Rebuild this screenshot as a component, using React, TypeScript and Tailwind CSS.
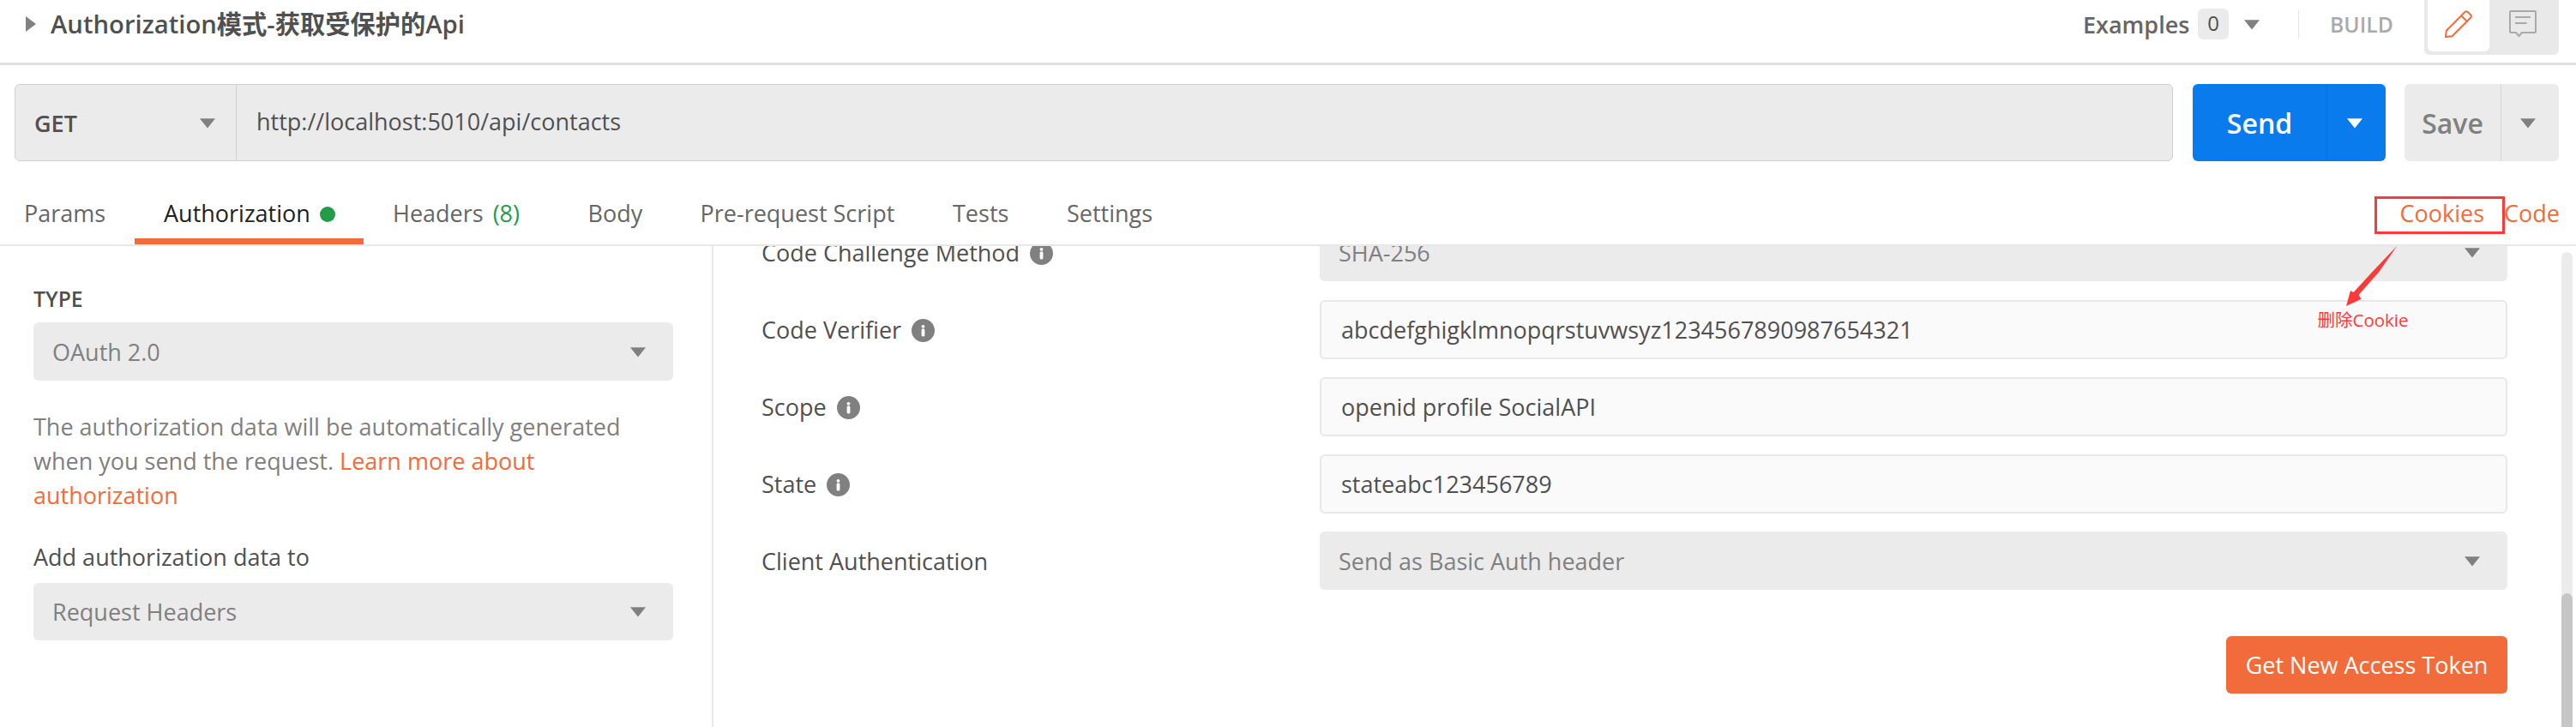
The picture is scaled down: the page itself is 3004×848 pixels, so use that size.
import React from "react";

function Caret({ className = "" }: { className?: string }) {
  return (
    <svg className={`h-[12px] w-[18px] shrink-0 ${className}`} viewBox="0 0 18 12" fill="currentColor">
      <path d="M0 .3h18L9 11.600z" />
    </svg>
  );
}

function Info() {
  return (
    <svg className="mt-[22px] h-[27px] w-[27px] shrink-0" viewBox="0 0 27 27">
      <circle cx="13.5" cy="13.5" r="13.5" fill="#808080" />
      <circle cx="13.5" cy="8.800" r="1.9" fill="#fff" />
      <rect x="11.600" y="11.600" width="3.800" height="8.800" rx="1.300" fill="#fff" />
    </svg>
  );
}

function Select({ value, className = "" }: { value: string; className?: string }) {
  return (
    <div className={`flex items-start justify-between rounded-md bg-[#ebebeb] pr-8 pl-[22px] text-[#808080] ${className}`}>
      <span>{value}</span>
      <Caret className="mt-[14px]" />
    </div>
  );
}

function Field({ value }: { value: string }) {
  return (
    <div className="flex h-[69px] w-[1385px] items-start rounded-md border-2 border-[#e8e8e8] bg-[#fafafa] pt-[13px] pl-[23px]">
      <span>{value}</span>
    </div>
  );
}

function Row({ label, info, children }: { label: string; info?: boolean; children: React.ReactNode }) {
  return (
    <div className="flex h-[90px] items-start">
      <div className="flex w-[651px] items-start gap-3">
        <span className="mt-[15px]">{label}</span>
        {info && <Info />}
      </div>
      {children}
    </div>
  );
}

function Tab({ className, children }: { className: string; children: React.ReactNode }) {
  return <div className={`flex h-16 shrink-0 items-start pt-2 ${className}`}>{children}</div>;
}

export default function App() {
  return (
    <div className="relative flex h-[848px] w-[3004px] flex-col overflow-hidden bg-white font-['Open_Sans','Noto_Sans_CJK_SC',sans-serif] text-[27px] leading-[39px] text-[#505050]">
      <header className="flex h-[76px] shrink-0 items-start border-b-[3px] border-[#e1e1e1]">
        <svg className="mt-[19px] ml-[30px] h-[18px] w-3" viewBox="0 0 12 18" fill="#808080">
          <path d="M0 0l12 9L0 18z" />
        </svg>
        <span className="mt-2 ml-[17px] text-[29.25px] leading-10 font-semibold">Authorization模式-获取受保护的Api</span>
        <span className="mt-[9px] ml-auto w-[124px] font-semibold text-[#666]">Examples</span>
        <span className="mt-[10px] ml-[10px] h-9 w-9 rounded-md bg-[#ebebeb] text-center text-2xl leading-[33px] font-medium">0</span>
        <Caret className="mt-[23px] ml-[18px] text-[#808080]" />
        <div className="mt-3 ml-[45px] h-[33px] w-px bg-[#e5e5e5]" />
        <span className="mt-[9px] ml-9 w-[73px] text-[24.75px] font-semibold text-[#aaa]">BUILD</span>
        <div className="mr-5 ml-[37px] flex h-16 w-[157px] items-start rounded-b-md bg-[#e9e9e9] pl-1">
          <div className="flex h-[60px] w-[72px] rounded-b-md bg-white pt-3 pl-5">
            <svg className="h-8 w-8" viewBox="0 0 32 32" fill="none" stroke="#f26b3a" strokeWidth="2" strokeLinejoin="round">
              <path d="M1 31L1.800 23.800L23.500 2Q25 .6 26.500 1.800L30.300 5.500Q31.500 7 30.200 8.500L8.500 30.200ZM19.300 6.300L25.600 12.800" />
            </svg>
          </div>
          <svg className="mt-3 ml-[23px] h-8 w-8" viewBox="0 0 32 32" fill="none" stroke="#a9a9a9" strokeWidth="2" strokeLinejoin="round">
            <path d="M2 1H30Q31 1 31 2V25Q31 26 30 26H15L11.500 30L8 26H2Q1 26 1 25V2Q1 1 2 1ZM7 8H25M7 15H20.500" />
          </svg>
        </div>
      </header>

      <div className="mt-[22px] flex h-[90px] shrink-0 pl-[17px]">
        <div className="flex w-[2517px] items-start rounded-md border border-[#d1d1d1] bg-[#ebebeb]">
          <div className="flex h-full w-[258px] items-start justify-between border-r border-[#d1d1d1] pr-6 pl-[22px]">
            <span className="mt-[25px] font-semibold">GET</span>
            <Caret className="mt-[39px] text-[#808080]" />
          </div>
          <span className="mt-[23px] ml-[23px]">http://localhost:5010/api/contacts</span>
        </div>
        <div className="ml-[23px] flex w-[225px] items-start rounded-md bg-[#097bed] text-white">
          <div className="flex h-full w-[157px] justify-center border-r border-[#0b6fd3] pt-6">
            <span className="text-[32px] leading-[43px] font-semibold">Send</span>
          </div>
          <Caret className="mt-10 ml-[23px]" />
        </div>
        <div className="ml-[22px] flex w-[180px] items-start rounded-md bg-[#ebebeb] text-[#808080]">
          <div className="flex h-full w-[113px] justify-center border-r border-[#d6d6d6] pt-6">
            <span className="text-[32px] leading-[43px] font-semibold">Save</span>
          </div>
          <Caret className="mt-10 ml-[22px]" />
        </div>
      </div>

      <nav className="mt-[33px] flex h-[66px] shrink-0 items-start border-b-2 border-[#e8e8e8] text-[#666]">
        <Tab className="w-[157px] pl-7">Params</Tab>
        <div className="flex h-16 w-[267px] items-start border-b-[7px] border-[#f26b3a] pt-2 pl-[34px] text-[#212121]">
          Authorization
          <div className="mt-3 ml-[11px] h-[18px] w-[18px] rounded-full bg-[#249c47]" />
        </div>
        <Tab className="w-[227px] gap-[11px] pl-[34px]">
          <span>Headers</span>
          <span className="text-[#249c47]">(8)</span>
        </Tab>
        <Tab className="w-[131px] pl-[34.5px]">Body</Tab>
        <Tab className="w-[296px] pl-[34.5px]">Pre-request Script</Tab>
        <Tab className="w-[132px] pl-[33px]">Tests</Tab>
        <Tab className="pl-[34px]">Settings</Tab>
        <span className="mt-2 ml-auto text-[#f26b3a]">Cookies</span>
        <span className="mt-2 mr-[19px] ml-[23px] text-[#f26b3a]">Code</span>
      </nav>

      <main className="flex min-h-0 flex-1">
        <aside className="w-[832px] border-r-2 border-[#e8e8e8] pt-[42px] pl-[39px]">
          <div className="text-[24.75px] font-semibold">TYPE</div>
          <Select value="OAuth 2.0" className="mt-2 h-[68px] w-[746px] pt-[15px]" />
          <p className="mt-[33.5px] w-[746px] leading-10 text-[#808080]">
            The authorization data will be automatically generated
            <br />
            when you send the request.{" "}
            <span className="text-[#f26b3a]">
              Learn more about
              <br />
              authorization
            </span>
          </p>
          <div className="mt-[32.5px]">Add authorization data to</div>
          <Select value="Request Headers" className="mt-[11px] h-[67px] w-[746px] pt-[14px]" />
        </aside>
        <section className="min-w-0 flex-1 overflow-hidden pl-14">
          <div className="mt-[-27px]">
            <Row label="Code Challenge Method" info>
              <Select value="SHA-256" className="h-[68px] w-[1385px] pt-[15px]" />
            </Row>
            <Row label="Code Verifier" info>
              <Field value="abcdefghigklmnopqrstuvwsyz1234567890987654321" />
            </Row>
            <Row label="Scope" info>
              <Field value="openid profile SocialAPI" />
            </Row>
            <Row label="State" info>
              <Field value="stateabc123456789" />
            </Row>
            <Row label="Client Authentication">
              <Select value="Send as Basic Auth header" className="h-[68px] w-[1385px] pt-[15px]" />
            </Row>
          </div>
          <div className="flex w-[2036px] justify-end pt-8">
            <button className="flex h-[67px] w-[328px] items-start justify-center rounded-md bg-[#f26b3a] pt-[14px] text-white">
              Get New Access Token
            </button>
          </div>
        </section>
        <div className="mt-[7px] mr-1 w-[13px] shrink-0 rounded-t-full bg-[#ebebeb] pt-[398px]">
          <div className="h-full rounded-t-full bg-[#c6c6c6]" />
        </div>
      </main>

      <div className="absolute top-[229px] left-[2769px] h-[44px] w-[152px] border-[3px] border-[#fd3939]" />
      <svg className="absolute top-[286px] left-[2735px] h-[72px] w-[62px]" viewBox="0 0 62 72" fill="#fd3939">
        <path d="M60.500 .5L39.500 30.700L15.500 58L18.500 62.700L1 71L6 53L9.500 55L32 30.500Z" />
      </svg>
      <div className="absolute top-[359px] left-[2702.5px] text-[20.5px] leading-[28px] font-medium whitespace-nowrap text-[#fd3939]">
        <span className="font-normal">删除</span>Cookie
      </div>
    </div>
  );
}
